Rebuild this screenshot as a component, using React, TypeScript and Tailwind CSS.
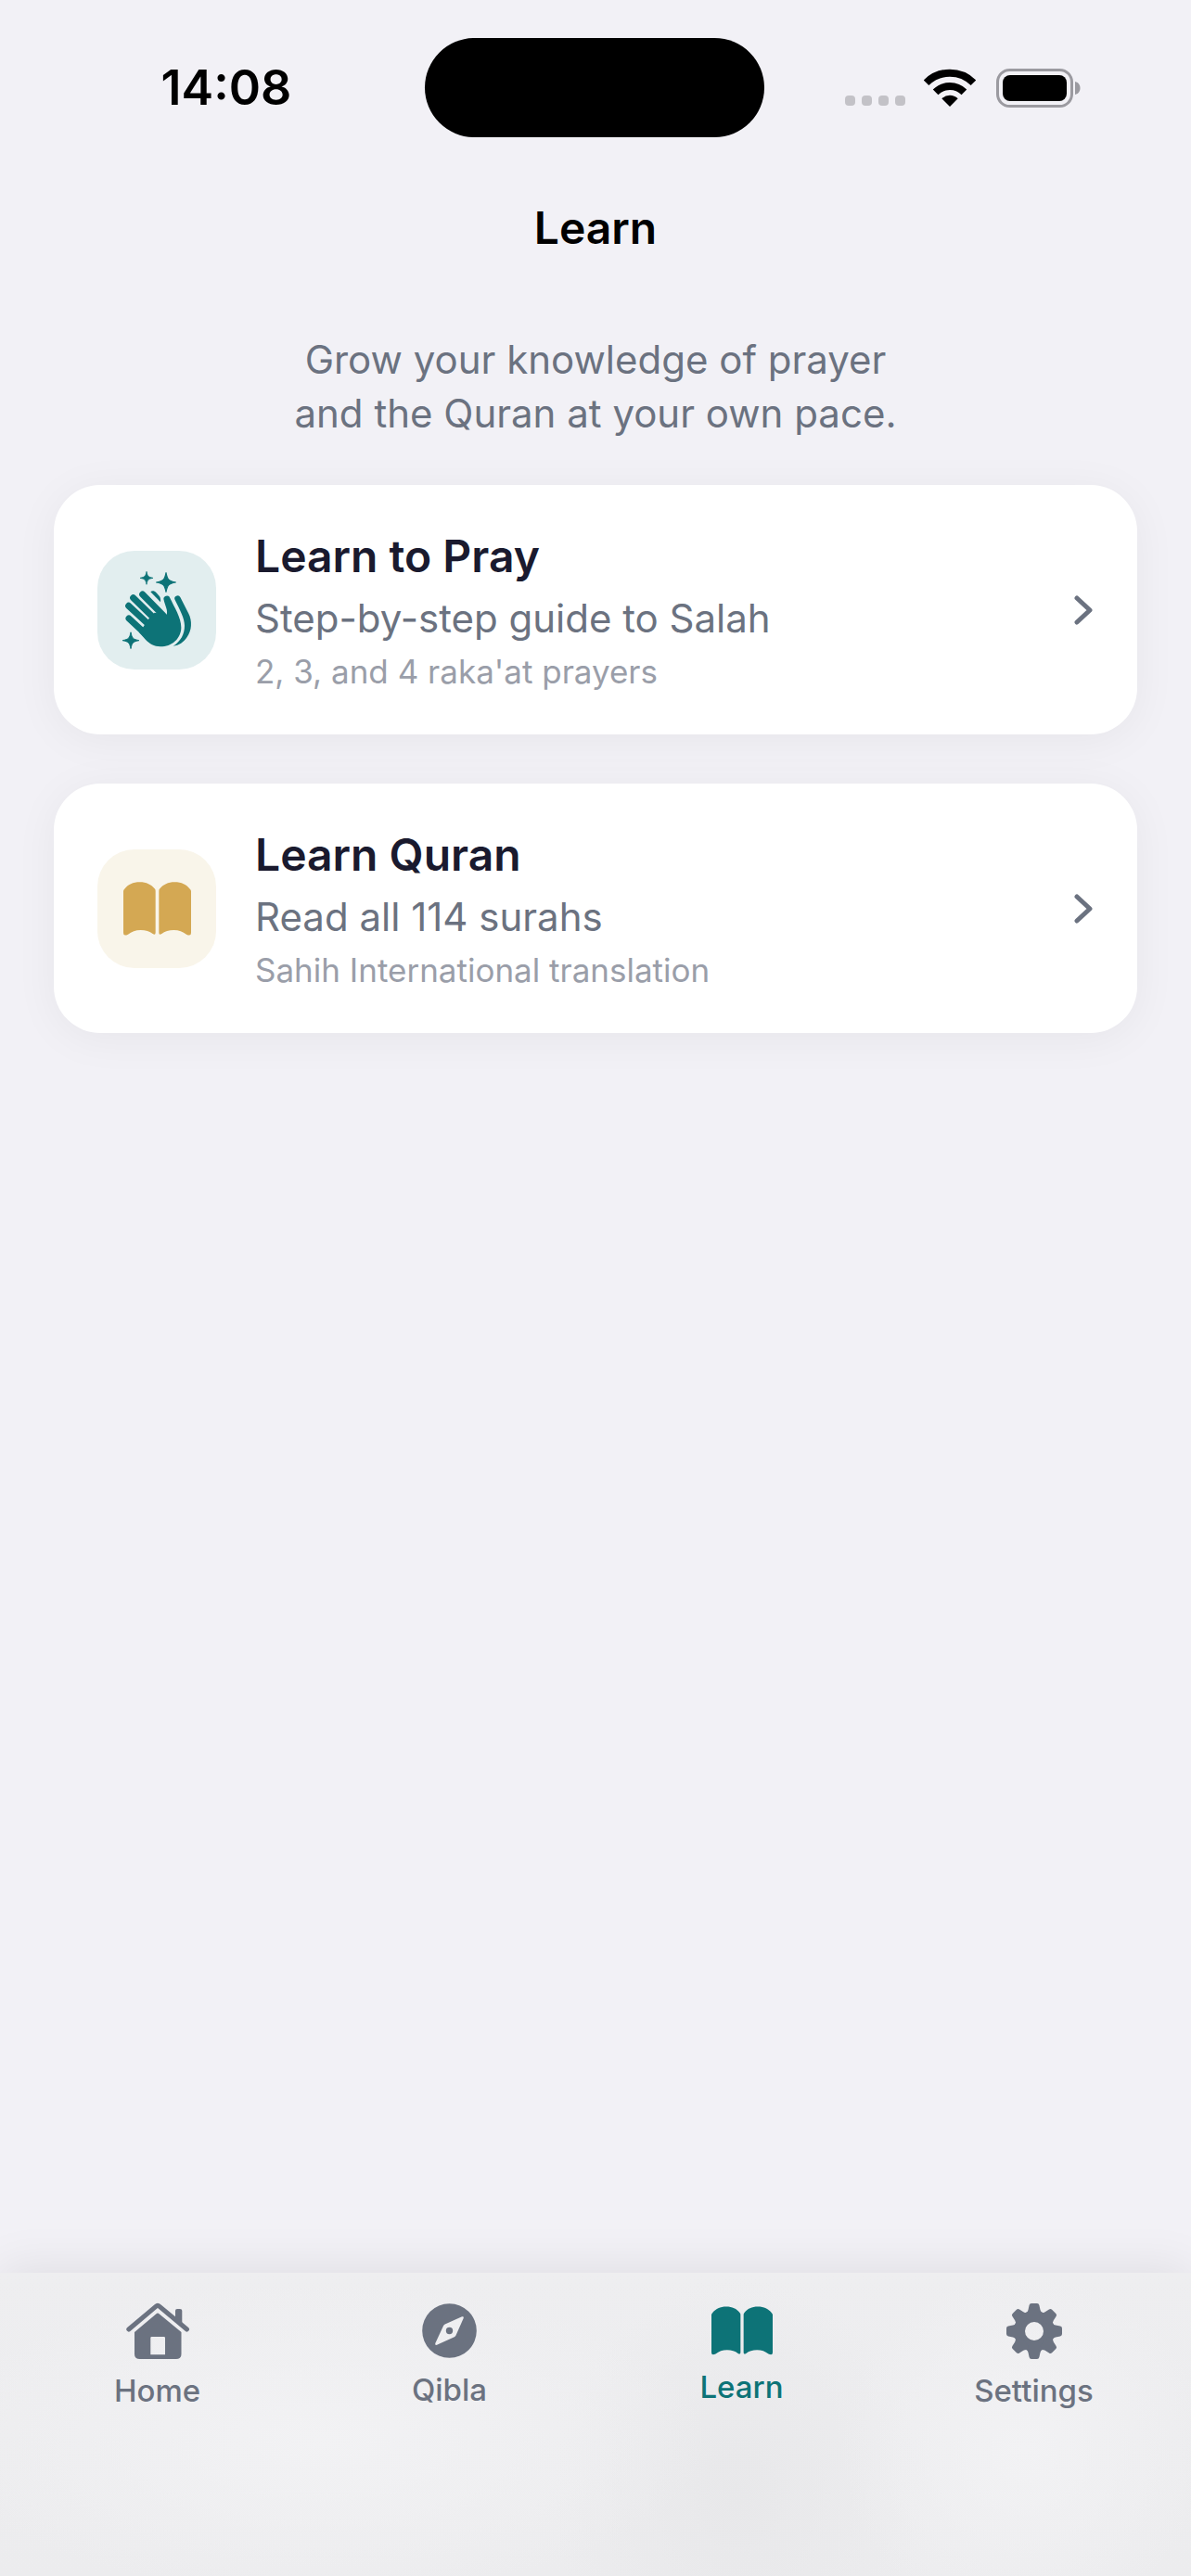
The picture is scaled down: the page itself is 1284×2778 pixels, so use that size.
import type { ReactNode } from "react";

const LESSONS = [
  {
    title: "Learn to Pray",
    subtitle: "Step-by-step guide to Salah",
    note: "2, 3, and 4 raka'at prayers",
    link: "#pray",
    tile: "bg-[#e2eeef] text-[#0d7377]",
    icon: <HandsIcon />,
  },
  {
    title: "Learn Quran",
    subtitle: "Read all 114 surahs",
    note: "Sahih International translation",
    link: "#quran",
    tile: "bg-[#f9f5ea] text-[#d4a853]",
    icon: <BookIcon className="w-[73px] h-[58px]" />,
  },
];

const TABS = [
  { label: "Home", link: "#home", icon: <HouseIcon /> },
  { label: "Qibla", link: "#qibla", icon: <CompassIcon /> },
  { label: "Learn", link: "#learn", icon: <BookIcon className="w-[66px] h-[53px]" />, active: true },
  { label: "Settings", link: "#settings", icon: <GearIcon /> },
];

function Sparkle({ x, y, r }: { x: number; y: number; r: number }) {
  return (
    <path
      transform={`translate(${x} ${y}) scale(${r})`}
      d="M0 -.95C.14 -.25 .25 -.14 .95 0C.25 .14 .14 .25 0 .95C-.14 .25 -.25 .14 -.95 0C-.25 -.14 -.14 -.25 0 -.95Z"
      stroke="currentColor"
      strokeWidth=".1"
      strokeLinejoin="round"
    />
  );
}

function HandsIcon() {
  return (
    <svg viewBox="150 126 234 264" className="w-[78px] h-[88px]" fill="currentColor" aria-hidden="true">
      <Sparkle x={234} y={154} r={22} />
      <Sparkle x={297} y={168} r={33} />
      <Sparkle x={183} y={356} r={28} />
      {/* front hand */}
      <g stroke="currentColor" strokeWidth="21" strokeLinecap="round">
        <path d="M177 285L246 349" />
        <path d="M176 244L246 309" />
        <path d="M191 218L266 292" />
        <path d="M221 207L288 275" />
      </g>
      <path d="M223 313L240 287L260 266L299 272C304 261 294 243 290 226A10.500 10.500 0 0 1 310 219C323 247 346 282 346 314C346 350 315 376 279 376C257 376 245 367 232 355L210 330Z" />
      {/* back hand */}
      <path d="M247 199C252 194 260 196 265 201L275 212C279 217 280 224 279 232Z" />
      <path d="M326 225A9.500 9.500 0 0 1 343 216L369 267C383 293 380 325 365 345C354 361 339 373 320 374C345 358 357 335 357 308C357 284 342 258 326 225Z" />
    </svg>
  );
}

function BookIcon({ className }: { className: string }) {
  return (
    <svg viewBox="159 182 219 174" className={className} fill="currentColor" aria-hidden="true">
      <path d="M159 213Q159 209 162 206C174 191 190 183 212 183C234 183 249 191 260 204Q263 207 263 211V346Q263 356 254 350C244 342 231 338 215 338C198 338 186 343 174 352Q159 359 159 347Z" />
      <path d="M378 213Q378 209 375 206C363 191 347 183 325 183C303 183 288 191 277 204Q274 207 274 211V346Q274 356 283 350C293 342 306 338 322 338C339 338 351 343 363 352Q378 359 378 347Z" />
    </svg>
  );
}

function HouseIcon() {
  return (
    <svg viewBox="134 63 70 61" className="w-[70px] h-[61px]" fill="currentColor" aria-hidden="true">
      <path d="M137.800 92L167 67.300Q169 65.600 171 67.300L200.500 92" fill="none" stroke="currentColor" strokeWidth="5" strokeLinecap="round" />
      <path d="M188 83V72Q188 70 190 70H193Q195.300 70 195.300 72V88Z" />
      <path
        fillRule="evenodd"
        d="M144 95L167.500 75.200Q169 74 170.500 75.200L194.500 95V118.500Q194.500 124 189 124H149.500Q144 124 144 118.500ZM162.500 100Q161.300 100 161.300 101.200V119.300H177V101.200Q177 100 175.800 100Z"
      />
    </svg>
  );
}

function CompassIcon() {
  return (
    <svg viewBox="-29.500 -29.500 59 59" className="w-[59px] h-[59px]" fill="currentColor" aria-hidden="true">
      <path
        fillRule="evenodd"
        d="M0 -29.300A29.300 29.300 0 1 1 0 29.300A29.300 29.300 0 1 1 0 -29.300ZM13.600 -15.200L-4.800 -7Q-6 -6.500 -6.500 -5.300L-15.200 13.500Q-15.600 16 -13.500 15.300L5.300 6.800Q6.500 6.200 7 5L15.200 -13.500Q15.700 -15.900 13.600 -15.200ZM0 -3.700A3.700 3.700 0 1 1 0 3.700A3.700 3.700 0 1 1 0 -3.700Z"
      />
    </svg>
  );
}

function GearIcon() {
  return (
    <svg viewBox="-30 -30 60 60" className="w-[60px] h-[60px]" aria-hidden="true">
      <circle r="16" fill="none" stroke="currentColor" strokeWidth="12" />
      {[0, 45, 90, 135, 180, 225, 270, 315].map((angle) => (
        <path
          key={angle}
          transform={`rotate(${angle})`}
          fill="currentColor"
          d="M-9.500 -19Q-7 -20.500 -6.500 -23L-5.400 -28Q-5 -30 -3 -30H3Q5 -30 5.400 -28L6.500 -23Q7 -20.500 9.500 -19L5 -15H-5Z"
        />
      ))}
    </svg>
  );
}

function StatusIcons() {
  return (
    <div className="flex items-center">
      <div className="flex gap-[7px] pt-7">
        {[0, 1, 2, 3].map((dot) => (
          <span key={dot} className="size-[11px] rounded-[4px] bg-[#c3c2c7]" />
        ))}
      </div>
      <svg viewBox="0 0 56 41" className="ml-5 w-[56px] h-[41px]" aria-hidden="true">
        <g fill="none" stroke="#000" strokeWidth="8">
          <path d="M2.500 15.300A36 36 0 0 1 53.500 15.300" />
          <path d="M12.600 25.400A21.800 21.800 0 0 1 43.400 25.400" />
        </g>
        <path d="M28 41L19.300 32.300A12.300 12.300 0 0 1 36.700 32.300Z" />
      </svg>
      <svg viewBox="0 0 91 42" className="ml-[22px] w-[91px] h-[42px]" aria-hidden="true">
        <rect x="1.500" y="1.500" width="80" height="39" rx="13" fill="none" stroke="#9b9aa0" strokeWidth="3" />
        <rect x="7" y="7" width="69" height="28" rx="8" />
        <path d="M85 14C89 15 90.500 18 90.500 21C90.500 24 89 27 85 28Z" fill="#9b9aa0" />
      </svg>
    </div>
  );
}

function LessonCard({ lesson }: { lesson: (typeof LESSONS)[number] }) {
  return (
    <a
      href={lesson.link}
      className="flex items-center rounded-[50px] bg-white px-[47px] py-[42px] shadow-[0_6px_48px_rgba(0,0,0,0.05)]"
    >
      <span className={`flex size-[128px] shrink-0 items-center justify-center rounded-[40px] ${lesson.tile}`}>
        {lesson.icon}
      </span>
      <div className="ml-[42px] flex-1">
        <h2 className="text-[48px] leading-[70px] font-semibold text-[#1a1a2e]">{lesson.title}</h2>
        <p className="text-[42px] leading-[63px] text-[#6b7280]">{lesson.subtitle}</p>
        <p className="text-[35px] leading-[52px] text-[#9a9ea9]">{lesson.note}</p>
      </div>
      <svg viewBox="0 0 22 32" className="w-[22px] h-[32px] shrink-0" fill="none" aria-hidden="true">
        <path d="M4 3L18 16L4 29" stroke="#6b7280" strokeWidth="5" strokeLinecap="round" strokeLinejoin="round" />
      </svg>
    </a>
  );
}

function Tab({ label, link, icon, active }: { label: string; link: string; icon: ReactNode; active?: boolean }) {
  return (
    <a
      href={link}
      aria-current={active ? "page" : undefined}
      className={`flex h-[115px] flex-1 flex-col items-center justify-center gap-[14px] ${active ? "text-[#0d7377]" : "text-[#6b7280]"}`}
    >
      {icon}
      <span className="text-[33px] leading-[40px] font-medium">{label}</span>
    </a>
  );
}

export default function App() {
  return (
    <div className="flex min-h-screen flex-col bg-[#f2f1f6] font-['Inter',sans-serif]">
      <div className="flex items-center pt-[41px]">
        <div className="flex flex-1 justify-center pl-[30px]">
          <time className="text-[52px] leading-[60px] font-semibold text-black">14:08</time>
        </div>
        <div className="h-[107px] w-[366px] rounded-full bg-black" />
        <div className="flex flex-1 justify-center pr-8">
          <StatusIcons />
        </div>
      </div>

      <header className="pt-[68px] text-center">
        <h1 className="text-[48px] leading-[60px] font-semibold text-black">Learn</h1>
      </header>

      <main className="flex-1 px-[58px] pt-[83px]">
        <p className="text-center text-[42px] leading-[58px] text-[#6b7280]">
          Grow your knowledge of prayer
          <br />
          and the Quran at your own pace.
        </p>
        <div className="mt-12 flex flex-col gap-[53px]">
          {LESSONS.map((lesson) => (
            <LessonCard key={lesson.title} lesson={lesson} />
          ))}
        </div>
      </main>

      <nav className="flex bg-[#eeeef0] bg-[radial-gradient(420px_170px_at_27%_55%,#f2f2f4,transparent),radial-gradient(200px_190px_at_86%_58%,#f2f2f4,transparent),radial-gradient(200px_240px_at_62%_75%,#e8e8ea,transparent),linear-gradient(#eeeef0,#ececee)] px-3 pt-8 pb-[180px] shadow-[0_-6px_48px_rgba(0,0,0,0.08)]">
        {TABS.map((tab) => (
          <Tab key={tab.label} {...tab} />
        ))}
      </nav>
    </div>
  );
}
